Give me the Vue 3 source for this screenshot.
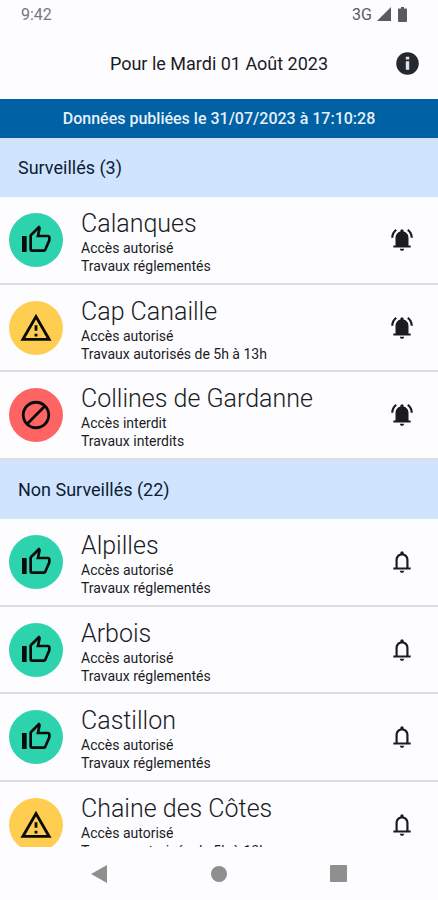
<script setup>
import { ref } from 'vue'

const sections = ref([
  {
    id: 'watched',
    title: 'Surveillés',
    count: 3,
    watched: true,
    items: [
      { name: 'Calanques', level: 'ok', access: 'Accès autorisé', works: 'Travaux réglementés' },
      { name: 'Cap Canaille', level: 'warn', access: 'Accès autorisé', works: 'Travaux autorisés de 5h à 13h' },
      { name: 'Collines de Gardanne', level: 'closed', access: 'Accès interdit', works: 'Travaux interdits' },
    ],
  },
  {
    id: 'unwatched',
    title: 'Non Surveillés',
    count: 22,
    watched: false,
    items: [
      { name: 'Alpilles', level: 'ok', access: 'Accès autorisé', works: 'Travaux réglementés' },
      { name: 'Arbois', level: 'ok', access: 'Accès autorisé', works: 'Travaux réglementés' },
      { name: 'Castillon', level: 'ok', access: 'Accès autorisé', works: 'Travaux réglementés' },
      { name: 'Chaine des Côtes', level: 'warn', access: 'Accès autorisé', works: 'Travaux autorisés de 5h à 13h' },
    ],
  },
])

const levelIcons = {
  ok: 'M5 9v12H1.500V9H5M9 21a2 2 0 0 1-2-2V9c0-.55.22-1.050.59-1.410L14.170 1l1.060 1.060c.27.27.44.64.44 1.050l-.03.32L14.690 8H21c1.110 0 2 .9 2 2v2c0 .26-.05.5-.14.73l-3.020 7.050C19.540 20.500 18.830 21 18 21H9m0-2h9.030L21 12v-2h-8.790l1.130-5.320L9 9.030V19z',
  warn: 'M12 5.99 19.53 19H4.47L12 5.99M12 2 1 21h22L12 2zm1 14h-2v2h2v-2zm0-6h-2v4h2v-4z',
  closed: 'M12 2C6.48 2 2 6.48 2 12s4.48 10 10 10 10-4.48 10-10S17.52 2 12 2zM4 12c0-4.42 3.58-8 8-8 1.85 0 3.55.63 4.9 1.69L5.69 16.9C4.63 15.55 4 13.85 4 12zm8 8c-1.85 0-3.55-.63-4.9-1.69L18.31 7.1C19.37 8.45 20 10.15 20 12c0 4.42-3.58 8-8 8z',
}
const bellBody =
  'M4 19v-2h2v-7q0-2.075 1.250-3.687T10.500 4.200v-.7q0-.625.438-1.062T12 2t1.063.438T13.500 3.500v.7q2 .5 3.250 2.113T18 10v7h2v2H4zM12 22q-.825 0-1.412-.587T10 20h4q0 .825-.587 1.413T12 22z'
const bellActive =
  bellBody +
  'M2 10q0-2.500 1.113-4.587T6.100 1.950l1.175 1.600q-1.500 1.100-2.387 2.775T4 10H2zM20 10q0-2-.887-3.675T16.725 3.550l1.175-1.600q1.875 1.375 2.988 3.463T22 10h-2z'
const bellOutline = bellBody + 'M8 17h8v-7q0-1.650-1.175-2.825T12 6 9.175 7.175 8 10v7z'
</script>

<template>
  <div class="app">
    <div class="status">
      <span class="clock">9:42</span>
      <span class="network">3G</span>
      <svg class="signal" viewBox="0 0 14 14" aria-hidden="true"><path d="M14 0v14H0z" /></svg>
      <svg class="battery" viewBox="0 0 9 15" aria-hidden="true">
        <path d="M3 0h3v1.500h2a1 1 0 0 1 1 1V14a1 1 0 0 1-1 1H1a1 1 0 0 1-1-1V2.500a1 1 0 0 1 1-1h2z" />
      </svg>
    </div>

    <header class="header">
      <h1 class="date">Pour le Mardi 01 Août 2023</h1>
      <button class="icon-button" type="button" aria-label="Informations">
        <svg class="info-icon" viewBox="0 0 24 24">
          <circle class="info-disc" cx="12" cy="12" r="10" />
          <path class="info-mark" d="M10.500 10h3v7.500h-3zM10.500 6h3v2.500h-3z" />
        </svg>
      </button>
    </header>

    <p class="published">Données publiées le 31/07/2023 à 17:10:28</p>

    <main class="content">
      <section v-for="section in sections" :key="section.id">
        <h2 class="section-title">{{ section.title }} ({{ section.count }})</h2>
        <ul class="list">
          <li v-for="item in section.items" :key="item.name" class="row">
            <span class="badge" :class="item.level">
              <svg class="badge-icon" viewBox="0 0 24 24" aria-hidden="true"><path :d="levelIcons[item.level]" /></svg>
            </span>
            <div class="text">
              <h3 class="name">{{ item.name }}</h3>
              <p class="detail">{{ item.access }}</p>
              <p class="detail">{{ item.works }}</p>
            </div>
            <button class="bell-button" type="button" :aria-label="item.name" :aria-pressed="section.watched">
              <svg class="bell" viewBox="0 0 24 24">
                <path fill-rule="evenodd" :d="section.watched ? bellActive : bellOutline" />
              </svg>
            </button>
          </li>
        </ul>
      </section>
    </main>

    <nav class="system-nav">
      <button class="nav-button" type="button" aria-label="Retour">
        <svg class="nav-icon" viewBox="0 0 18 18"><path d="M17 0v18L1 9z" /></svg>
      </button>
      <button class="nav-button" type="button" aria-label="Accueil">
        <svg class="nav-icon" viewBox="0 0 18 18"><circle cx="9" cy="9" r="8" /></svg>
      </button>
      <button class="nav-button" type="button" aria-label="Applications récentes">
        <svg class="nav-icon" viewBox="0 0 18 18"><rect x="0" y="0" width="17" height="17" rx="1" /></svg>
      </button>
    </nav>
  </div>
</template>

<style>
body {
  background: #fdfcff;
}
</style>

<style scoped>
.app {
  display: flex;
  flex-direction: column;
  height: 100vh;
  color: #1a1c1e;
  font-family: Roboto, 'Liberation Sans', sans-serif;
}
h1,
h2,
h3,
p,
ul {
  margin: 0;
  padding: 0;
}
button {
  display: flex;
  align-items: center;
  justify-content: center;
  padding: 0;
  border: 0;
  background: none;
  color: inherit;
}
svg {
  display: block;
  fill: currentColor;
}
.status {
  display: flex;
  align-items: center;
  flex: none;
  height: 28px;
  padding: 0 31px 0 21px;
  color: #5a5b5d;
  font-size: 16px;
}
.clock {
  flex: 1;
  color: #77787a;
}
.signal {
  width: 14px;
  height: 14px;
  margin: 0 7px 0 5px;
}
.battery {
  width: 9px;
  height: 15px;
}
.header {
  display: grid;
  grid-template-columns: 44px 1fr 44px;
  align-items: center;
  flex: none;
  height: 71px;
  padding: 0 9px;
}
.date {
  grid-column: 2;
  font-size: 18px;
  font-weight: 400;
  text-align: center;
}
.icon-button {
  height: 44px;
}
.info-icon {
  width: 27px;
  height: 27px;
}
.info-disc {
  fill: #25282d;
}
.info-mark {
  fill: #dfe3ea;
}
.published {
  flex: none;
  background: #0061a4;
  color: #e6f0fa;
  font-size: 16px;
  font-weight: 500;
  line-height: 39px;
  text-align: center;
}
.content {
  flex: 1;
  min-height: 0;
  overflow-y: auto;
  scrollbar-width: none;
}
.section-title {
  padding: 0 18px;
  background: #d1e4ff;
  color: #0b1d33;
  font-size: 18px;
  font-weight: 400;
  line-height: 59px;
}
.list {
  list-style: none;
}
.row {
  display: flex;
  align-items: center;
  gap: 18px;
  box-sizing: border-box;
  height: 87px;
  padding: 0 14px 0 9px;
  border-bottom: 2px solid #dddde0;
}
.row:nth-child(odd) {
  height: 88px;
}
.badge {
  display: flex;
  align-items: center;
  justify-content: center;
  flex: none;
  width: 54px;
  height: 54px;
  border-radius: 50%;
  color: #0a0c0b;
}
.ok {
  background: #2dd3ac;
}
.warn {
  background: #ffce51;
}
.closed {
  background: #ff6464;
}
.badge-icon {
  width: 34px;
  height: 34px;
}
.ok .badge-icon {
  width: 32px;
  height: 32px;
}
.text {
  flex: 1;
  min-width: 0;
  padding-top: 4px;
}
.name {
  font-size: 25px;
  font-weight: 300;
  line-height: 30px;
}
.detail {
  font-size: 14px;
  line-height: 18px;
}
.bell-button {
  flex: none;
  width: 44px;
  height: 44px;
}
.bell {
  width: 26px;
  height: 26px;
}
.system-nav {
  display: flex;
  justify-content: center;
  gap: 76px;
  flex: none;
  height: 53px;
  color: #8f8f8f;
}
.nav-button {
  width: 44px;
}
.nav-icon {
  width: 18px;
  height: 18px;
}
</style>
